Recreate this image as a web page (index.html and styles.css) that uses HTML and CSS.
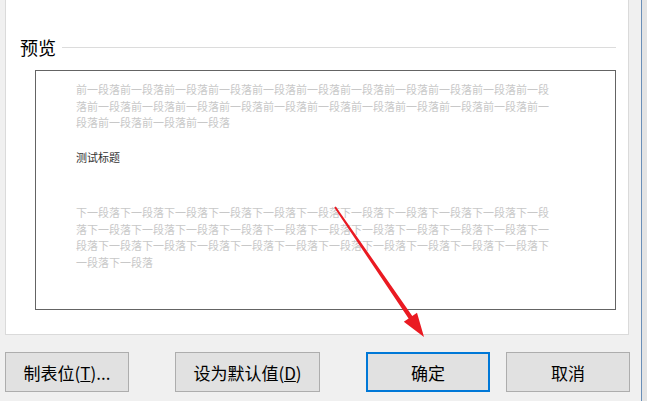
FILE: index.html
```html
<!DOCTYPE html>
<html lang="zh-CN">
<head>
  <meta charset="UTF-8">
  <title>段落 - 预览</title>
  <meta name="viewport" content="width=device-width, initial-scale=1.0">
  <link rel="stylesheet" href="styles.css">
</head>
<body>
  <div class="window">
    <div class="client">
      <div class="panel">
        <div class="group-title">
          <span class="group-label">预览</span>
          <i class="rule"></i>
        </div>
        <div class="preview">
          <p class="prev-para">前一段落前一段落前一段落前一段落前一段落前一段落前一段落前一段落前一段落前一段落前一段落前一段落前一段落前一段落前一段落前一段落前一段落前一段落前一段落前一段落前一段落前一段落前一段落前一段落前一段落</p>
          <p class="sample-heading">测试标题</p>
          <p class="next-para">下一段落下一段落下一段落下一段落下一段落下一段落下一段落下一段落下一段落下一段落下一段落下一段落下一段落下一段落下一段落下一段落下一段落下一段落下一段落下一段落下一段落下一段落下一段落下一段落下一段落下一段落下一段落下一段落下一段落下一段落下一段落下一段落下一段落下一段落</p>
        </div>
      </div>
      <div class="buttons">
        <button class="btn btn-tabs">制表位(<u>T</u>)...</button>
        <button class="btn btn-default">设为默认值(<u>D</u>)</button>
        <button class="btn btn-ok">确定</button>
        <button class="btn btn-cancel">取消</button>
      </div>
    </div>
    <div class="frame-edge"></div>
  </div>

  <svg class="arrow" width="647" height="401" viewBox="0 0 647 401">
    <polygon fill="#ea1a22" points="335.8,206.4 412.3,316 417,312.7 424,337 403.8,321.7 408.6,318.4 334.2,207.6"/>
  </svg>
</body>
</html>
```

FILE: styles.css
```css
body {
  margin: 0;
  background-color: #f0f0f0;
  font-family: "Noto Sans CJK SC", "Noto Sans", sans-serif;
  color: #000;
  overflow: hidden;
}
.window {
  display: flex;
  height: 401px;
}
.client {
  width: 641px;
  padding-left: 5px;
  box-sizing: border-box;
}
.panel {
  width: 624px;
  height: 335px;
  box-sizing: border-box;
  background: #ffffff;
  border: 1px solid #dadada;
  border-top: none;
}
.group-title {
  display: flex;
  align-items: center;
  padding: 35px 12px 0 14px;
}
.group-label {
  font-size: 18px;
  line-height: 24px;
}
.rule {
  flex: 1;
  height: 1px;
  margin-left: 6px;
  background: #dcdcdc;
}
.preview {
  height: 240px;
  margin: 11px 12px 0 29px;
  padding: 10px 0 0 40px;
  box-sizing: border-box;
  border: 1px solid #646464;
}
.preview p {
  margin: 0;
  width: 475px;
  font-size: 11px;
  line-height: 16.5px;
}
.prev-para,
.next-para {
  color: #c8c8c8;
}
.sample-heading {
  margin-top: 18px !important;
  color: #333;
}
.next-para {
  margin-top: 39px !important;
}
.buttons {
  display: flex;
  padding-top: 17px;
}
.btn {
  height: 40px;
  box-sizing: border-box;
  background: #e1e1e1;
  border: 1px solid #adadad;
  font-family: "Noto Sans CJK SC", "Noto Sans", sans-serif;
  font-size: 17px;
  color: #000;
  padding: 0;
}
.btn u {
  text-underline-offset: 1px;
}
.btn-tabs {
  width: 124px;
}
.btn-default {
  width: 145px;
  margin-left: 46px;
}
.btn-ok {
  width: 124px;
  margin-left: 46px;
  border: 2px solid #0078d7;
}
.btn-cancel {
  width: 124px;
  margin-left: 16px;
}
.frame-edge {
  flex: 1;
  border-left: 1px solid #6a8fb8;
  background: #e4e4e4;
}
.arrow {
  position: absolute;
  left: 0;
  top: 0;
  pointer-events: none;
}
```
